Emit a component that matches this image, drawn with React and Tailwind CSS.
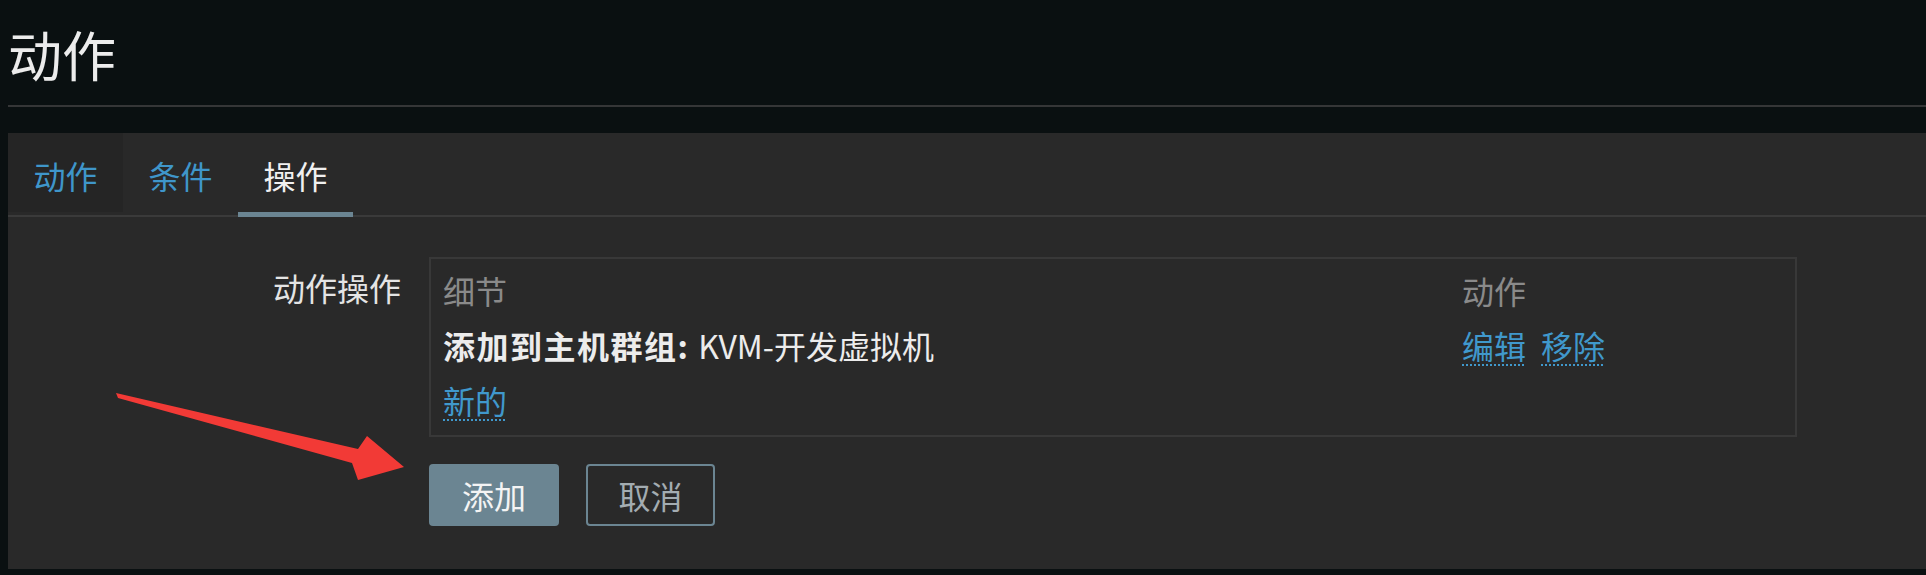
const font = { fontFamily: '"Noto Sans CJK SC", "Noto Sans", sans-serif' };

const tabs = [
  { label: '动作', active: false, dark: true },
  { label: '条件', active: false },
  { label: '操作', active: true },
];

const Arrow = () => (
  <svg
    className="absolute left-0 top-0 pointer-events-none"
    width="1926"
    height="575"
    viewBox="0 0 1926 575"
  >
    <polygon
      points="116,393 358,449 367,436 404,467 358,480 352,463 118,398"
      fill="#f23a36"
    />
  </svg>
);

const App = () => {
  return (
    <div
      className="relative w-[1926px] h-[575px] overflow-hidden bg-[#0a1011] pl-[8px]"
      style={font}
    >
      {/* Header */}
      <div className="h-[107px] border-b-2 border-[#353637] pt-[27px]">
        <h1 className="text-[54px] leading-[54px] font-normal text-[#ececec]">动作</h1>
      </div>

      {/* Panel */}
      <div className="mt-[26px] h-[436px] bg-[#292929]">
        {/* Tabs */}
        <div className="flex border-b-2 border-[#3a3a3a]">
          {tabs.map((t) => (
            <div
              key={t.label}
              className={`h-[84px] -mb-[2px] w-[115px] flex items-center justify-center pt-[4px] text-[32px] leading-none border-b-[5px] bg-clip-padding ${
                t.active ? 'border-[#6b8592] text-[#f0f0f0]' : 'border-transparent text-[#3f96ca]'
              } ${t.dark ? 'bg-[#252525]' : ''}`}
            >
              {t.label}
            </div>
          ))}
        </div>

        {/* Form */}
        <div className="flex mt-[40px]">
          <div className="w-[393px] text-right mt-[10px] text-[32px] leading-[40px] text-[#e4e4e4]">
            动作操作
          </div>
          <div className="ml-[28px]">
            <div className="w-[1368px] h-[180px] border-2 border-[#383838] pl-[12px] pt-[3px] text-[32px]">
              <div className="grid grid-cols-[1019px_1fr] auto-rows-[55px] items-center">
                <div className="text-[#8a8a8a] leading-none">细节</div>
                <div className="text-[#8a8a8a] leading-none">动作</div>

                <div className="text-[#ececec] leading-none whitespace-nowrap">
                  <span className="font-bold tracking-[1.5px]">添加到主机群组: </span>
                  <span>KVM-开发虚拟机</span>
                </div>
                <div className="flex gap-[15px] leading-none text-[#4098cc]">
                  <span className="underline decoration-dotted decoration-2 underline-offset-[6px]">编辑</span>
                  <span className="underline decoration-dotted decoration-2 underline-offset-[6px]">移除</span>
                </div>

                <div className="leading-none text-[#4098cc]">
                  <span className="underline decoration-dotted decoration-2 underline-offset-[6px]">新的</span>
                </div>
                <div />
              </div>
            </div>

            {/* Buttons */}
            <div className="flex gap-[27px] mt-[27px]">
              <button className="w-[130px] h-[62px] rounded-[4px] bg-[#6b8592] text-[32px] leading-none text-[#f4f4f4]">
                添加
              </button>
              <button className="w-[129px] h-[62px] rounded-[4px] border-2 border-[#6b8592] text-[32px] leading-none text-[#a3acb1]">
                取消
              </button>
            </div>
          </div>
        </div>
      </div>

      <Arrow />
    </div>
  );
};

export default App;
